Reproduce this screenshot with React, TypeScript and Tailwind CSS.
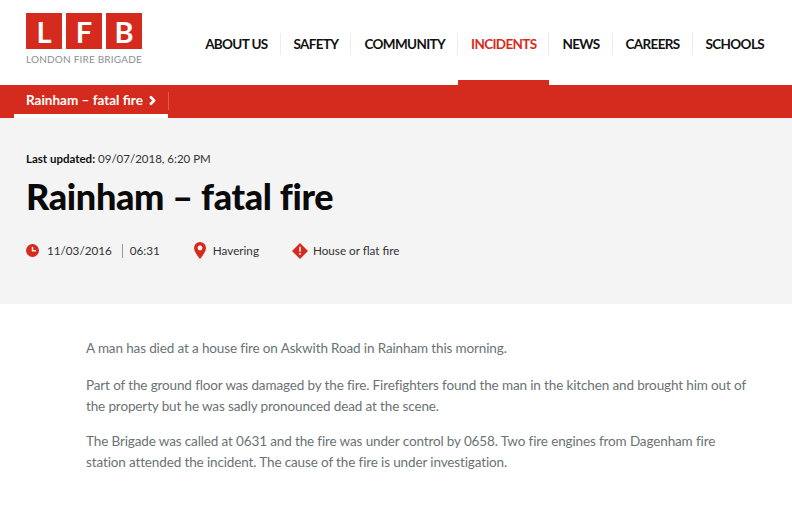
import { ChevronRight } from "lucide-react"

const navItems = ["ABOUT US", "SAFETY", "COMMUNITY", "INCIDENTS", "NEWS", "CAREERS", "SCHOOLS"]

const Logo = () => (
    <div className="flex flex-col">
        <div className="flex gap-1">
            {["L", "F", "B"].map(letter => (
                <div key={letter} className="w-9 h-9 bg-[#d52b1e] text-white flex items-center justify-center text-[29px] font-bold leading-none">
                    {letter}
                </div>
            ))}
        </div>
        <div className="mt-[4px] text-[10px] leading-[13px] text-[#8a8f91] tracking-[0.2px] whitespace-nowrap">LONDON FIRE BRIGADE</div>
    </div>
)

const ClockIcon = () => (
    <svg width="13" height="13" viewBox="0 0 13 13">
        <circle cx="6.5" cy="6.5" r="6.5" fill="#d52b1e" />
        <path d="M6.5 3v3.7H10" fill="none" stroke="#f4f4f4" strokeWidth="1.5" />
    </svg>
)

const PinIcon = () => (
    <svg width="12" height="17" viewBox="0 0 12 17">
        <path d="M6 0a6 6 0 0 0-6 6c0 4 6 11 6 11s6-7 6-11a6 6 0 0 0-6-6z" fill="#d52b1e" />
        <circle cx="6" cy="6" r="2.4" fill="#f4f4f4" />
    </svg>
)

const WarnIcon = () => (
    <svg width="16" height="16" viewBox="0 0 16 16">
        <path d="M8 0l8 8-8 8-8-8z" fill="#d52b1e" />
        <path d="M7.2 3.8h1.6v5H7.2zM7.2 10h1.6v1.7H7.2z" fill="#f4f4f4" />
    </svg>
)

export default function App() {
    return (
        <div className="min-h-[507px] bg-white font-['Lato','Open_Sans',sans-serif]">
            <header className="h-[85px] flex justify-between pl-[26px] pr-[16px] pt-[13px] bg-white">
                <Logo />
                <nav className="flex items-start mt-[20px]">
                    {navItems.map((item, index) => {
                        const active = item === "INCIDENTS"
                        return (
                            <div key={item} className={`relative h-[52px] ${active ? "border-b-[5px] border-[#d52b1e]" : ""}`}>
                                <div className={`h-[22px] pl-[13px] pr-[12px] flex items-center text-[13.5px] font-bold tracking-[-0.65px] whitespace-nowrap ${index < navItems.length - 1 ? "border-r border-[#ececec]" : ""} ${active ? "text-[#d52b1e]" : "text-[#111]"}`}>
                                    {item}
                                </div>
                            </div>
                        )
                    })}
                </nav>
            </header>

            <div className="h-[33px] bg-[#d52b1e] pl-[14px] flex">
                <div className="h-[33px] pl-3 border-b-[4px] border-white flex items-center gap-[3px] text-white text-[13.5px] font-bold w-[154px] whitespace-nowrap pt-[1px]">
                    Rainham – fatal fire
                    <ChevronRight size={13} strokeWidth={5} />
                </div>
                <div className="w-px h-[18px] mt-[7px] bg-[#e4574c]" />
            </div>

            <section className="h-[186px] bg-[#f4f4f4] px-[26px] pt-[33px]">
                <div className="text-[11.5px] leading-[15px] text-[#333]">
                    <span className="font-bold text-[#111]">Last updated:</span> 09/07/2018, 6:20 PM
                </div>
                <h1 className="mt-[7px] text-[36px] leading-[46px] font-black text-[#0a0a0a] tracking-[-0.35px]">Rainham – fatal fire</h1>
                <div className="mt-[23px] flex items-center text-[11.7px] text-[#333]">
                    <ClockIcon />
                    <span className="ml-2">11/03/2016</span>
                    <span className="mr-[7px] ml-[10px] w-px h-[14px] bg-[#999]" />
                    <span>06:31</span>
                    <span className="ml-[34px]"><PinIcon /></span>
                    <span className="ml-[7px]">Havering</span>
                    <span className="ml-[33px]"><WarnIcon /></span>
                    <span className="ml-[5px]">House or flat fire</span>
                </div>
            </section>

            <main className="pl-[86px] pr-[44px] pt-[34px] text-[13.5px] leading-[21px] tracking-[-0.13px] text-[#6b7274]">
                <p>A man has died at a house fire on Askwith Road in Rainham this morning.</p>
                <p className="mt-[16px]">Part of the ground floor was damaged by the fire. Firefighters found the man in the kitchen and brought him out of the property but he was sadly pronounced dead at the scene.</p>
                <p className="mt-[14px]">The Brigade was called at 0631 and the fire was under control by 0658. Two fire engines from Dagenham fire station attended the incident. The cause of the fire is under investigation.</p>
            </main>
        </div>
    )
}
